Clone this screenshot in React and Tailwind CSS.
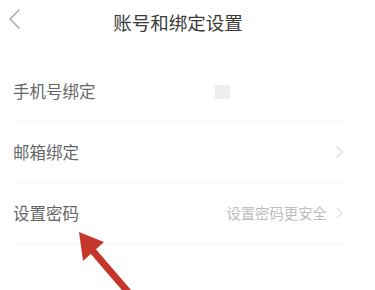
import React from 'react';

const font = { fontFamily: '"Noto Sans CJK SC", "Noto Sans", sans-serif' };

const Chevron = () => (
  <svg width="7" height="12" viewBox="0 0 7 12" fill="none" className="shrink-0">
    <path d="M1 1l5 5-5 5" stroke="#dddddd" strokeWidth="1.1" strokeLinecap="round" strokeLinejoin="round" />
  </svg>
);

const Row = ({ label, right, chevron, square }) => (
  <div className="relative h-[61px] flex items-center border-b border-[#f5f5f5]">
    <span className="text-[16.5px] text-[#666] leading-none">{label}</span>
    {square && <span className="absolute left-[202px] top-[24px] w-[15px] h-[14px] bg-[#eeeeee]" />}
    <div className="ml-auto flex items-center gap-[9px]">
      {right && <span className="text-[14.4px] text-[#bdbdbd] leading-none">{right}</span>}
      {chevron && <Chevron />}
    </div>
  </div>
);

export default function App() {
  return (
    <div className="relative w-[375px] h-[290px] bg-white overflow-hidden" style={font}>
      {/* Header */}
      <div className="relative h-[44px] flex items-center justify-center">
        <svg width="12" height="20" viewBox="0 0 12 20" fill="none" className="absolute left-[8px] top-[9px]">
          <path d="M11 1L2 10l9 9" stroke="#a0a0a0" strokeWidth="1.3" strokeLinecap="round" strokeLinejoin="round" />
        </svg>
        <span className="text-[18.5px] text-[#3a3a3a] leading-none pr-[19px]">账号和绑定设置</span>
      </div>

      {/* List */}
      <div className="mt-[17px] ml-[13px] w-[330px]">
        <Row label="手机号绑定" square />
        <Row label="邮箱绑定" chevron />
        <Row label="设置密码" right="设置密码更安全" chevron />
      </div>

      {/* Annotation arrow */}
      <svg className="absolute left-0 top-0 pointer-events-none" width="375" height="290" viewBox="0 0 375 290">
        <line x1="92" y1="250" x2="135" y2="300" stroke="#c5362b" strokeWidth="7" />
        <polygon points="79,232 104,242 83,261" fill="#c5362b" />
      </svg>
    </div>
  );
}
